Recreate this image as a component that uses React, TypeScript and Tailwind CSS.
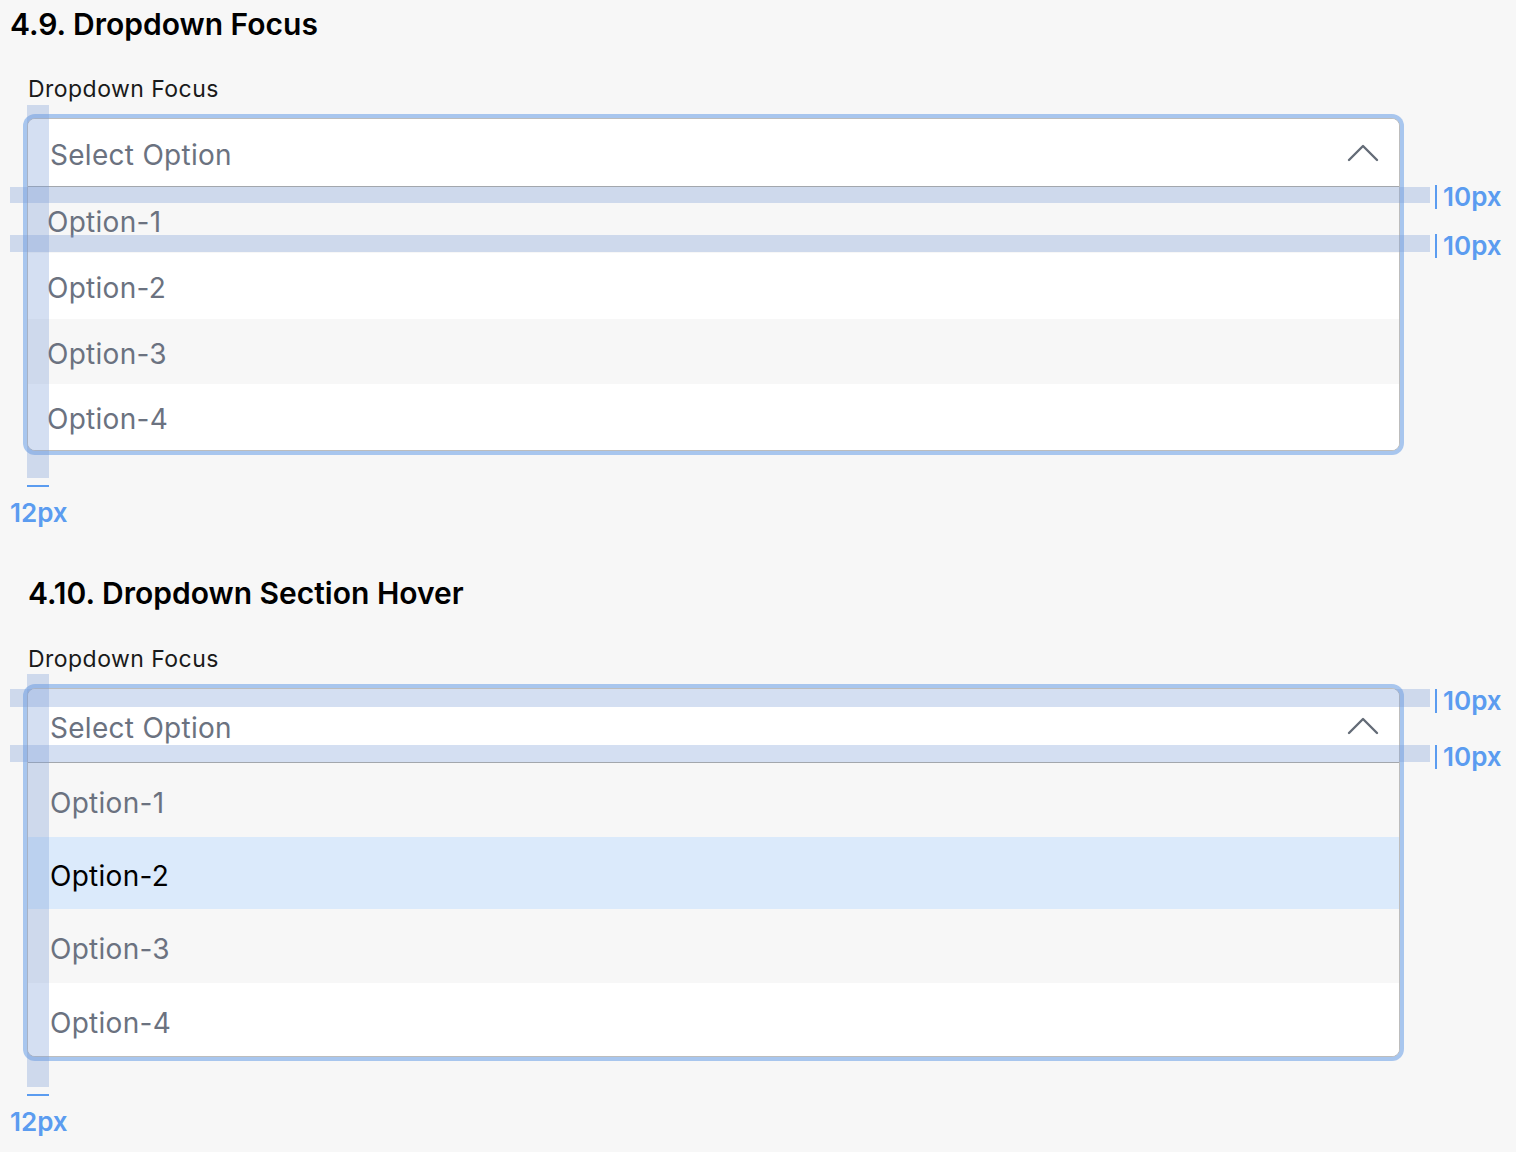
import React from "react";

type Opt = { label: string; h: string; bg: string; text: string };

function Chevron() {
  return (
    <svg width="32" height="18" viewBox="0 0 32 18" fill="none">
      <path d="M2 16 L16 2 L30 16" stroke="#646c77" strokeWidth="2.4" strokeLinecap="round" strokeLinejoin="round" />
    </svg>
  );
}

// "|10px" spacing note to the right of a band
function Marker({ top }: { top: string }) {
  return (
    <div className={`absolute left-[1408px] ${top} flex h-[24px] items-center gap-[6px]`}>
      <span className="h-full w-[2px] bg-[#5b9cf0]" />
      <span className="text-[26px] font-semibold leading-none text-[#5b9cf0]">10px</span>
    </div>
  );
}

const focusOptions: Opt[] = [
  { label: "Option-1", h: "h-[66px]", bg: "bg-[#f7f7f7]", text: "text-[#6b7280]" },
  { label: "Option-2", h: "h-[66px]", bg: "bg-white", text: "text-[#6b7280]" },
  { label: "Option-3", h: "h-[65px]", bg: "bg-[#f7f7f7]", text: "text-[#6b7280]" },
  { label: "Option-4", h: "h-[66px]", bg: "bg-white", text: "text-[#6b7280]" },
];

const hoverOptions: Opt[] = [
  { label: "Option-1", h: "h-[74px]", bg: "bg-[#f7f7f7]", text: "text-[#6b7280]" },
  { label: "Option-2", h: "h-[72px]", bg: "bg-[#dbeafb]", text: "text-black" },
  { label: "Option-3", h: "h-[74px]", bg: "bg-[#f7f7f7]", text: "text-[#6b7280]" },
  { label: "Option-4", h: "h-[73px]", bg: "bg-white", text: "text-[#6b7280]" },
];

export default function App() {
  return (
    <div className="min-h-screen bg-[#f7f7f7] pb-10 font-['Inter',sans-serif]">
      {/* 4.9 */}
      <h2 className="pl-[10px] text-[30px] font-semibold leading-[48px] text-black">4.9. Dropdown Focus</h2>
      <p className="mt-[26px] pl-[28px] text-[23px] leading-[30px] tracking-[0.02em] text-[#1a1a1a]">Dropdown Focus</p>

      <div className="relative ml-[27px] mt-[14px] w-[1373px]">
        <div className="overflow-hidden rounded-[8px] border border-[#bdbdbd] bg-white shadow-[0_0_0_4px_rgba(90,150,230,0.5)]">
          <div className="flex h-[68px] items-center justify-between border-b border-[#a3a7ad] bg-white pl-[22px] pr-[20px]">
            <span className="pt-[5px] text-[28px] tracking-[0.01em] text-[#6b7280]">Select Option</span>
            <Chevron />
          </div>
          {focusOptions.map((o) => (
            <div key={o.label} className={`flex items-center pl-[19px] ${o.h} ${o.bg}`}>
              <span className={`pt-[4px] text-[28px] tracking-[0.01em] ${o.text}`}>{o.label}</span>
            </div>
          ))}
        </div>

        {/* spacing annotations */}
        <div className="absolute left-0 top-[-13px] h-[373px] w-[22px] bg-[rgba(120,155,215,0.32)]" />
        <div className="absolute left-0 top-[367px] h-[2px] w-[22px] bg-[#5b9cf0]" />
        <span className="absolute left-[-17px] top-[380px] text-[26px] font-semibold leading-[30px] text-[#5b9cf0]">12px</span>
        <div className="absolute left-[-17px] top-[69px] h-[16px] w-[1420px] bg-[rgba(120,155,215,0.32)]" />
        <div className="absolute left-[-17px] top-[117px] h-[17px] w-[1420px] bg-[rgba(120,155,215,0.32)]" />
        <Marker top="top-[67px]" />
        <Marker top="top-[116px]" />
      </div>

      {/* 4.10 */}
      <h2 className="mt-[118px] pl-[28px] text-[30px] font-semibold leading-[48px] text-black">4.10. Dropdown Section Hover</h2>
      <p className="mt-[27px] pl-[28px] text-[23px] leading-[30px] tracking-[0.02em] text-[#1a1a1a]">Dropdown Focus</p>

      <div className="relative ml-[27px] mt-[14px] w-[1373px]">
        <div className="overflow-hidden rounded-[8px] border border-[#bdbdbd] bg-white shadow-[0_0_0_4px_rgba(90,150,230,0.5)]">
          <div className="flex h-[74px] items-center justify-between border-b border-[#a3a7ad] bg-white pl-[22px] pr-[20px]">
            <span className="pt-[5px] text-[28px] tracking-[0.01em] text-[#6b7280]">Select Option</span>
            <Chevron />
          </div>
          {hoverOptions.map((o) => (
            <div key={o.label} className={`flex items-center pl-[22px] ${o.h} ${o.bg}`}>
              <span className={`pt-[6px] text-[28px] tracking-[0.01em] ${o.text}`}>{o.label}</span>
            </div>
          ))}
        </div>

        <div className="absolute left-0 top-[-14px] h-[413px] w-[22px] bg-[rgba(120,155,215,0.32)]" />
        <div className="absolute left-0 top-[406px] h-[2px] w-[22px] bg-[#5b9cf0]" />
        <span className="absolute left-[-17px] top-[419px] text-[26px] font-semibold leading-[30px] text-[#5b9cf0]">12px</span>
        <div className="absolute left-[-17px] top-[1px] h-[18px] w-[1420px] bg-[rgba(120,155,215,0.32)]" />
        <div className="absolute left-[-17px] top-[57px] h-[17px] w-[1420px] bg-[rgba(120,155,215,0.32)]" />
        <Marker top="top-[1px]" />
        <Marker top="top-[57px]" />
      </div>
    </div>
  );
}
